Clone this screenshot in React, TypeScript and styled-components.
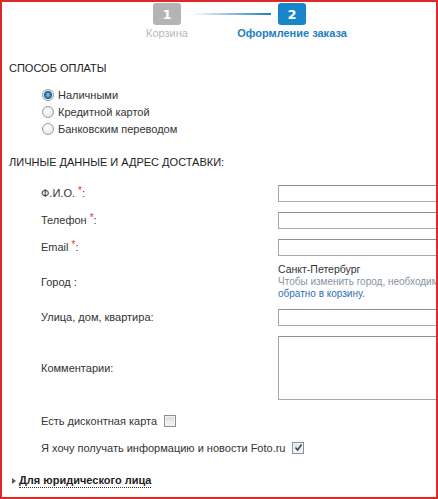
import React from 'react';
import styled, { createGlobalStyle } from 'styled-components';

const GlobalStyle = createGlobalStyle`
  body {
    margin: 0;
    font-family: 'Liberation Sans', Arial, sans-serif;
    font-size: 11px;
    color: #333;
    background: #fff;
  }
`;

const steps = [
  { num: 1, title: 'Корзина', active: false },
  { num: 2, title: 'Оформление заказа', active: true },
];

const payments = [
  { title: 'Наличными', checked: true },
  { title: 'Кредитной картой', checked: false },
  { title: 'Банковским переводом', checked: false },
];

function CheckMark() {
  return (
    <svg width="9" height="9" viewBox="0 0 9 9">
      <path d="M1.5 4.5 L3.6 7 L7.6 1.5" fill="none" stroke="#2f3f57" strokeWidth="1.4" />
    </svg>
  );
}

function App() {
  return (
    <Frame>
      <GlobalStyle />
      <Steps>
        {steps.map((step, index) => (
          <React.Fragment key={step.num}>
            {index > 0 && <Connector />}
            <Step>
              <StepBox active={step.active}>{step.num}</StepBox>
              <StepLabel active={step.active}>{step.title}</StepLabel>
            </Step>
          </React.Fragment>
        ))}
      </Steps>

      <SectionTitle>Способ оплаты</SectionTitle>
      <RadioList>
        {payments.map((p) => (
          <RadioRow key={p.title}>
            <Radio checked={p.checked} />
            <span>{p.title}</span>
          </RadioRow>
        ))}
      </RadioList>

      <SectionTitle className="second">Личные данные и адрес доставки:</SectionTitle>
      <FormGrid>
        <FieldLabel>
          Ф.И.О. <Req>*</Req>:
        </FieldLabel>
        <TextInput />
        <FieldLabel>
          Телефон <Req>*</Req>:
        </FieldLabel>
        <TextInput />
        <FieldLabel>
          Email <Req>*</Req>:
        </FieldLabel>
        <TextInput />
        <FieldLabel>Город :</FieldLabel>
        <CityBlock>
          <CityName>Санкт-Петербург</CityName>
          <CityNote>Чтобы изменить город, необходимо вернуться</CityNote>
          <CityLink>обратно в корзину.</CityLink>
        </CityBlock>
        <FieldLabel>Улица, дом, квартира:</FieldLabel>
        <TextInput />
        <FieldLabel>Комментарии:</FieldLabel>
        <TextArea />
        <CheckRow>
          <span>Есть дисконтная карта</span>
          <Checkbox checked={false} />
        </CheckRow>
        <CheckRow>
          <span>Я хочу получать информацию и новости Foto.ru</span>
          <Checkbox checked>
            <CheckMark />
          </Checkbox>
        </CheckRow>
      </FormGrid>

      <LegalToggle>
        <Arrow />
        <LegalText>Для юридического лица</LegalText>
      </LegalToggle>
    </Frame>
  );
}

const Frame = styled.div`
  width: 438px;
  height: 499px;
  box-sizing: border-box;
  border: 2px solid #dc2a2a;
  overflow: hidden;
  background: #fff;
`;

const Steps = styled.div`
  display: flex;
  align-items: flex-start;
  padding-left: 151px;
  margin-top: 1px;
`;

const Step = styled.div`
  display: flex;
  flex-direction: column;
  align-items: center;
  width: 28px;
`;

const StepBox = styled.div<{ active: boolean }>`
  display: flex;
  align-items: center;
  justify-content: center;
  width: 28px;
  height: 22px;
  border-radius: 3px;
  background: ${({ active }) => (active ? '#1786c8' : '#b4b4b4')};
  color: #fff;
  font-family: 'DejaVu Sans', Verdana, sans-serif;
  font-weight: bold;
  font-size: 13px;
`;

const StepLabel = styled.div<{ active: boolean }>`
  margin-top: 2px;
  white-space: nowrap;
  font-size: 11px;
  line-height: 13px;
  font-weight: ${({ active }) => (active ? 'bold' : 'normal')};
  color: ${({ active }) => (active ? '#1a80c2' : '#b8b8b8')};
`;

const Connector = styled.div`
  width: 80px;
  height: 2px;
  margin: 10px 7px 0 10px;
  background: linear-gradient(to right, rgba(26, 128, 194, 0), #1a80c2);
`;

const SectionTitle = styled.div`
  margin-top: 21px;
  padding-left: 7px;
  line-height: 15px;
  text-transform: uppercase;
  color: #222;

  &.second {
    margin-top: 18px;
  }
`;

const RadioList = styled.div`
  margin-top: 10px;
  padding-left: 40px;
`;

const RadioRow = styled.div`
  display: flex;
  align-items: center;
  gap: 4px;
  height: 17px;
`;

const Radio = styled.span<{ checked: boolean }>`
  box-sizing: border-box;
  width: 12px;
  height: 12px;
  border-radius: 50%;
  border: 1px solid #9a9a9a;
  background: ${({ checked }) =>
    checked
      ? 'radial-gradient(circle at 50% 50%, #8fd0f4 0, #2b7fb8 2.5px, #1d5f8e 3.5px, #e9e9e9 4.5px, #f4f4f4 100%)'
      : 'radial-gradient(circle at 40% 35%, #fff 0, #e2e2e2 100%)'};
`;

const FormGrid = styled.div`
  display: grid;
  grid-template-columns: 237px 200px;
  row-gap: 10px;
  align-items: center;
  margin-top: 15px;
  padding-left: 39px;
`;

const FieldLabel = styled.div`
  line-height: 15px;
`;

const Req = styled.span`
  color: #e8332a;
  font-size: 10px;
  vertical-align: top;
  position: relative;
  top: -3px;
`;

const TextInput = styled.div`
  box-sizing: border-box;
  width: 200px;
  height: 17px;
  border: 1px solid #a9a9a9;
  border-top-color: #8e8e8e;
  background: #fff;
`;

const TextArea = styled(TextInput)`
  height: 64px;
`;

const CityBlock = styled.div`
  display: flex;
  flex-direction: column;
  margin: -4px 0 -1px;
  white-space: nowrap;
`;

const CityName = styled.div`
  font-size: 10.5px;
  line-height: 14px;
  color: #333;
`;

const CityNote = styled.div`
  font-size: 10px;
  line-height: 12px;
  color: #8593a0;
`;

const CityLink = styled.a`
  font-size: 10px;
  line-height: 12px;
  color: #2e6fb0;
`;

const CheckRow = styled.div`
  grid-column: 1 / -1;
  display: flex;
  align-items: center;
  gap: 7px;
  height: 13px;
  margin-top: 4px;
`;

const Checkbox = styled.span<{ checked: boolean }>`
  box-sizing: border-box;
  display: flex;
  align-items: center;
  justify-content: center;
  width: 12px;
  height: 12px;
  border: 1px solid #8e8e8e;
  background: ${({ checked }) =>
    checked ? 'linear-gradient(#d6e6f6, #eef5fc)' : 'linear-gradient(#dadada, #f7f7f7)'};
  box-shadow: inset 0 0 0 1px #f4f4f4;
`;

const LegalToggle = styled.div`
  display: flex;
  align-items: center;
  gap: 3px;
  margin-top: 19px;
  padding-left: 10px;
`;

const Arrow = styled.span`
  width: 0;
  height: 0;
  border-left: 4px solid #5a5a5a;
  border-top: 3.5px solid transparent;
  border-bottom: 3.5px solid transparent;
`;

const LegalText = styled.span`
  font-weight: bold;
  color: #222;
  line-height: 14px;
  border-bottom: 1px dotted #333;
`;

export default App;
